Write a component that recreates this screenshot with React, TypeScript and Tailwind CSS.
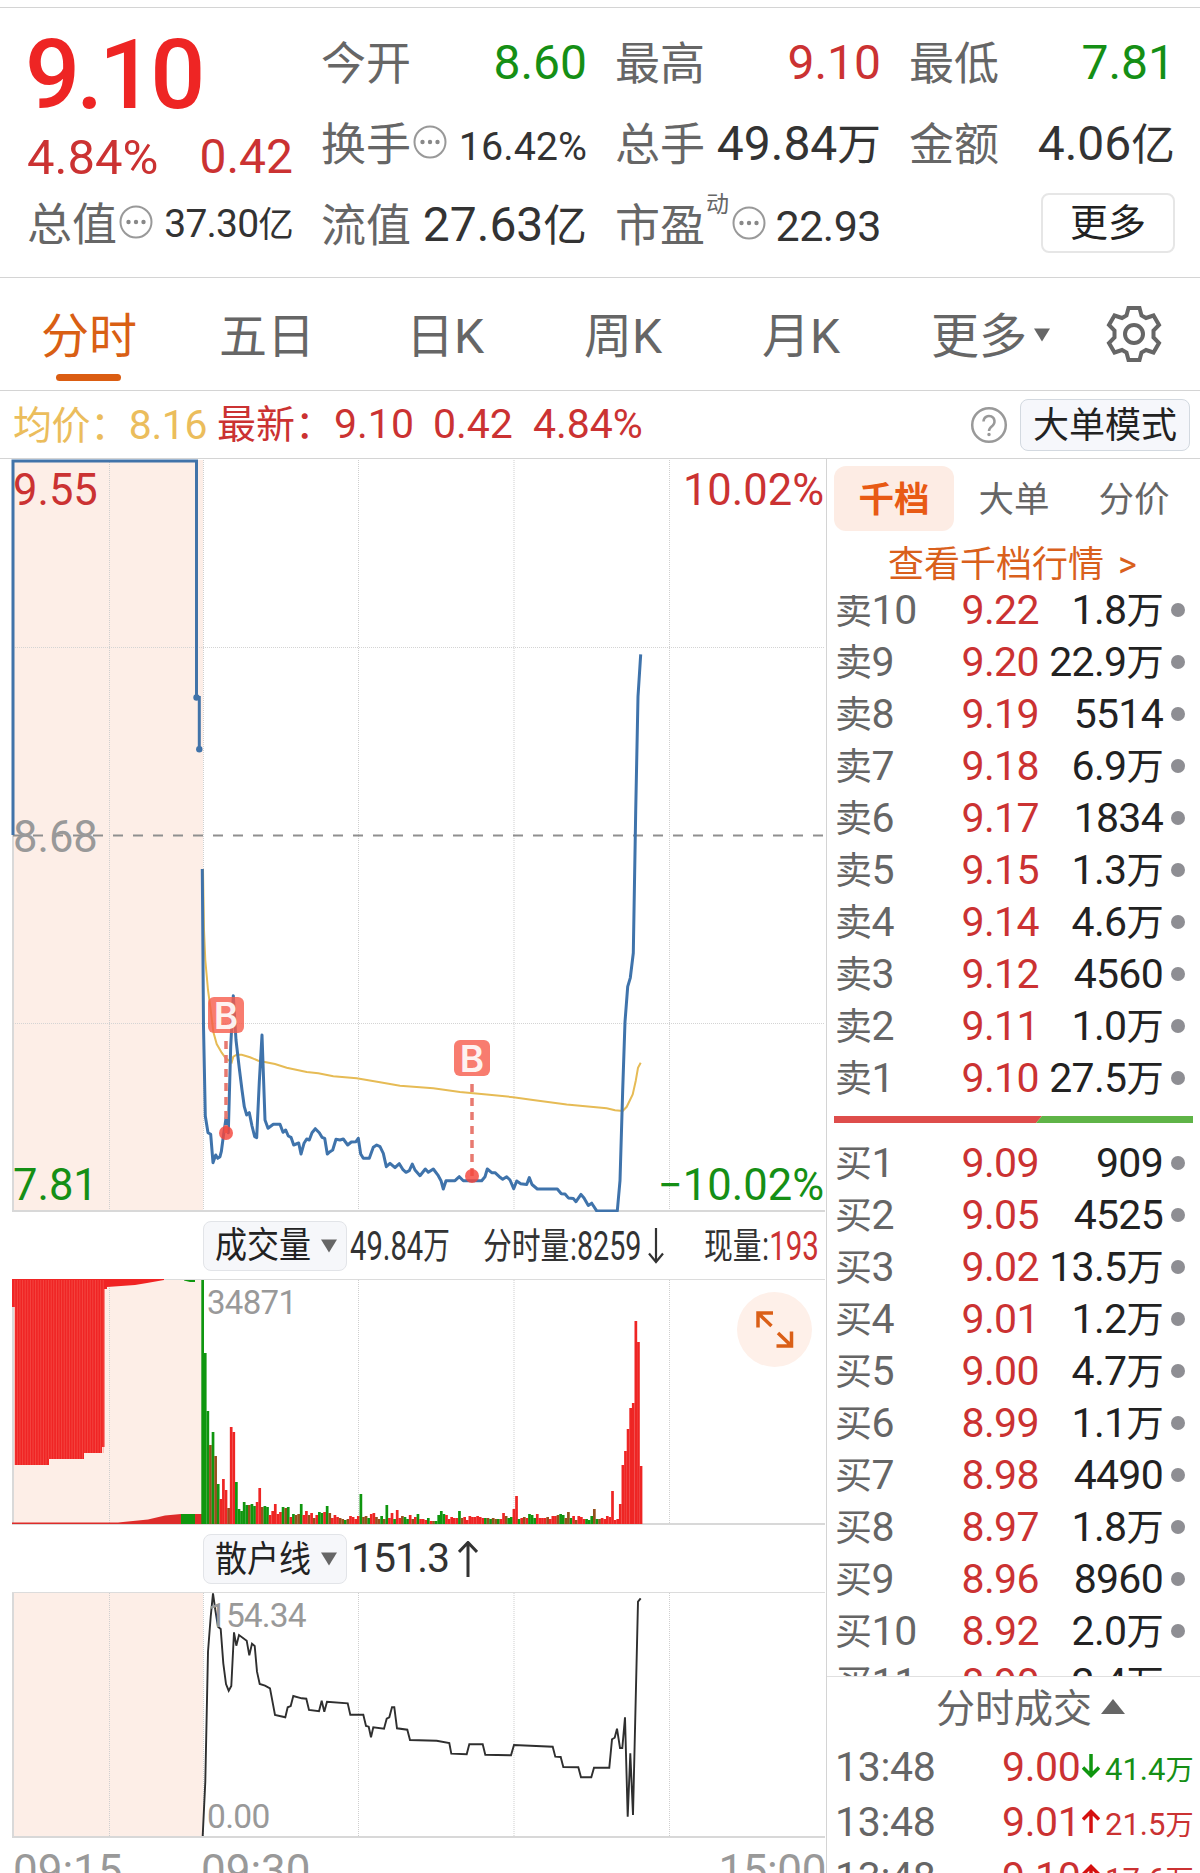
/**
 * Stock quote screen: quote header, period tabs, intraday charts,
 * order book and latest trades.
 */
import type { ReactNode } from 'react';

// ---------------------------------------------------------------------------
// Data
// ---------------------------------------------------------------------------

const PERIODS = ['分时', '五日', '日K', '周K', '月K'];

const ASKS = [
  ['卖10', '9.22', '1.8万'],
  ['卖9', '9.20', '22.9万'],
  ['卖8', '9.19', '5514'],
  ['卖7', '9.18', '6.9万'],
  ['卖6', '9.17', '1834'],
  ['卖5', '9.15', '1.3万'],
  ['卖4', '9.14', '4.6万'],
  ['卖3', '9.12', '4560'],
  ['卖2', '9.11', '1.0万'],
  ['卖1', '9.10', '27.5万'],
];

const BIDS = [
  ['买1', '9.09', '909'],
  ['买2', '9.05', '4525'],
  ['买3', '9.02', '13.5万'],
  ['买4', '9.01', '1.2万'],
  ['买5', '9.00', '4.7万'],
  ['买6', '8.99', '1.1万'],
  ['买7', '8.98', '4490'],
  ['买8', '8.97', '1.8万'],
  ['买9', '8.96', '8960'],
  ['买10', '8.92', '2.0万'],
  ['买11', '8.90', '2.4万'],
];

const TRADES = [
  { time: '13:48', price: '9.00', up: false, volume: '41.4万' },
  { time: '13:48', price: '9.01', up: true, volume: '21.5万' },
  { time: '13:48', price: '9.10', up: true, volume: '17.6万' },
];

// Chart x positions of the time grid
const GRID_X = [109.5, 203.5, 358.5, 514, 669.5];

const PRICE_LINE =
  '202.3,869 203.5,1026 205.3,1116 208,1132.7 210.7,1134.3 213,1162.7 215.7,1155 217.7,1158.3 220,1156.7 221.3,1151.7 223.3,1136.7 226,1118.3 228.3,1132.7 230.7,1046.7 233.3,995.7 236,1040 239.3,1068.3 242,1090 244.3,1106.7 246.7,1115 249.3,1112.7 252,1126 254.7,1136.7 256.7,1137.7 259.3,1081.7 262,1035 265,1120 268,1128.3 273.3,1124.3 280,1124.3 283,1132.3 285.7,1130 288.3,1136 291,1137.3 293.7,1145 298.7,1143 301,1154 304,1143.3 306.7,1139 309.3,1140 312,1132.7 315.3,1128.7 319.3,1132.7 322,1137.3 324.7,1138.3 327.3,1154 330,1151.7 332.7,1150 336,1139.3 340,1140 343.3,1139 347.7,1145 351.3,1142 356,1141.7 358.3,1138.3 360.7,1154 363.3,1158.3 369.3,1158.3 373.3,1147.3 376.7,1145 380,1146.7 383.3,1153.3 386.3,1166.7 390,1163.3 395,1167.7 399.3,1163.7 402.7,1169.3 406,1172.3 409.3,1170.7 412.3,1164 415,1170 420,1175.7 425.3,1169 428.3,1172.3 433.3,1169 438.3,1175.7 441,1180.7 443.3,1189 446,1180.7 455,1180.7 459.3,1176.7 463.3,1180.7 481.7,1180.7 485,1176.7 487.3,1169 491.7,1172.7 495,1172.7 499.3,1176.7 502.7,1179.3 506.7,1176.7 510,1180 513.7,1188.7 516.7,1181 520.7,1183.7 526.7,1184.5 529.3,1177.6 532,1184.5 537.3,1189 557.3,1189 561.3,1193.7 565,1194 568.3,1197.9 573.3,1198.6 576,1201.7 581,1194.4 584,1197.9 588.3,1205.5 591.7,1203.2 596.7,1210.9 617.3,1210.9 620,1180.7 622.7,1090 625,1021.8 627.7,986.6 630.3,977.8 633.3,953 635.7,811.3 638,696.5 640.7,654.4';

const AVERAGE_LINE =
  '203,869 204,930 205.3,960 208,990 210.7,1010 213.3,1031.7 216.7,1044 221.7,1052.7 225.7,1058.3 231.7,1062.3 233.3,1056.7 236.7,1054.7 241.7,1054.7 250,1057.3 258.3,1060.7 275,1064 286.7,1067.7 306.7,1072 318.3,1073.3 333.3,1076.3 356.7,1078.3 380,1082.3 400,1085.7 433.3,1088.3 460,1092 486.7,1094.5 513.3,1097.2 533,1100 566.7,1104.5 606.7,1108.3 615,1110.2 622.7,1111 626.7,1106.8 632.7,1094.5 635.7,1081 638,1067.8 640.7,1062.8';

const RETAIL_LINE =
  '202.7,1836 205.3,1781.7 208,1651.7 210.7,1616.7 213,1593.3 215.3,1610 218,1626.7 220.7,1629 223.3,1663.3 226,1684 228.7,1690.7 231.3,1686 234,1632.3 236.3,1645.7 239,1635 246.7,1640.7 249.3,1655.3 252,1643.7 254.7,1646 257,1671.7 259.7,1684 265,1685.7 270,1688.3 275,1715 285.3,1717.3 287.7,1707.3 290.7,1706 293.3,1696 301.7,1698.3 306.3,1698.7 309,1710 319,1711.3 321.7,1700.7 324.3,1711.7 327,1701.7 347.7,1703.3 350.3,1714.7 363.3,1714.7 366,1726 368.7,1726.7 371,1737.3 373.3,1727.3 384,1728.7 386.7,1718.7 389.3,1717.3 392,1707.3 394.3,1707.3 397,1728.3 407.3,1729.7 410,1740 436.7,1740.7 449.3,1743 451.3,1753.7 466.7,1754.3 469.3,1744.3 482.7,1744.3 485.3,1754.7 511,1755.3 514,1745 552.7,1746.7 555.3,1756.7 560.7,1757 563.3,1767 578.3,1767.3 581,1777.3 591.3,1777.3 594,1767.7 609.3,1767.7 612,1739.3 614.7,1737.7 617,1728.7 620,1748 622.3,1748 625,1717.3 627.7,1816.7 630.3,1753.3 633,1815 638,1601.7 640.7,1598.3';

// One bar per minute from 09:30
const VOLUMES = [
  244, 171, 113, 79, 92, 68, 40, 25, 45, 34, 16, 97, 92, 42, 15, 13, 22, 19, 19, 20, 18, 22, 36, 17, 18, 17, 9, 13, 20,
  10, 12, 17, 16, 17, 7, 10, 9, 10, 20, 9, 13, 9, 11, 6, 9, 12, 11, 12, 18, 11, 6, 9, 7, 6, 5, 4, 5, 8, 7, 5, 8, 30, 7,
  8, 6, 10, 11, 7, 5, 8, 5, 19, 6, 11, 5, 14, 6, 8, 7, 5, 9, 5, 7, 10, 5, 5, 4, 6, 3, 3, 3, 9, 13, 10, 9, 5, 7, 6, 6, 13,
  6, 7, 4, 8, 7, 7, 8, 7, 6, 6, 6, 5, 6, 5, 5, 5, 11, 8, 6, 7, 15, 28, 5, 6, 7, 6, 10, 9, 6, 10, 6, 6, 6, 7, 5, 8, 8, 9,
  10, 9, 6, 12, 6, 8, 4, 8, 7, 5, 5, 4, 8, 15, 5, 5, 6, 5, 8, 7, 33, 4, 5, 20, 59, 73, 95, 116, 121, 203, 182, 58,
];

const VOLUME_SIDES =
  'gggmgmgrrrmrrgggggmggrrmggrrrrrgmgrgmmgrrmrmrggrgmrrrmmgmrrrrgmmgrrmmgmgrrgrrmggrmrgrrrgrmggggrrrrrgmrrrrrrrrgmgmmgrrmggrrgrmrgggrrrrmrrrmggmmgrmrrrgggmgmrrrrrrrrrrrrrrrrrrr';

const SIDE_COLORS: Record<string, string> = { g: '#0f960f', r: '#ee2524', m: '#96501c' };

// ---------------------------------------------------------------------------
// Small pieces
// ---------------------------------------------------------------------------

/** Number followed by an optional Chinese unit, which is set a little smaller. */
function Amount({ value }: { value: string }) {
  const unit = value.match(/[万亿]$/)?.[0];
  return (
    <>
      {unit ? value.slice(0, -1) : value}
      {unit && <span className="text-[0.91em]">{unit}</span>}
    </>
  );
}

function MoreDots() {
  return (
    <svg className="mb-1 ml-px h-9 w-9 shrink-0" viewBox="0 0 36 36">
      <circle cx="18" cy="18" r="15.5" fill="none" stroke="#999" strokeWidth="2" />
      <circle cx="10.5" cy="18" r="2.2" fill="#888" />
      <circle cx="18" cy="18" r="2.2" fill="#888" />
      <circle cx="25.5" cy="18" r="2.2" fill="#888" />
    </svg>
  );
}

function Stat({ label, extra, children }: { label: string; extra?: ReactNode; children: ReactNode }) {
  return (
    <div className="flex h-[81px] items-center">
      <span className="-ml-px pt-[3px] text-[45px] text-[#666]">{label}</span>
      {extra}
      <span className="ml-auto">{children}</span>
    </div>
  );
}

function IndicatorButton({ label }: { label: string }) {
  return (
    <div className="flex h-[50px] w-[144px] shrink-0 items-center rounded-lg border border-[#e2e4e8] bg-[#f6f7fa] pl-[11px] text-[#222]">
      <span className="w-[106px] shrink-0">
        <span className="inline-block origin-left scale-x-[0.89] text-[36px] whitespace-nowrap">{label}</span>
      </span>
      <svg className="h-[14px] w-4 shrink-0" viewBox="0 0 16 14">
        <path d="M0 0.5h16L8 13.5z" fill="#666" />
      </svg>
    </div>
  );
}

function BookRow({ row }: { row: string[] }) {
  const [label, price, volume] = row;
  return (
    <div className="flex h-[52px] shrink-0 items-center pt-px text-[41px]">
      <span className="w-[100px] tracking-[-0.4px] text-[#666]">
        <span className="text-[37px]">{label[0]}</span>
        {label.slice(1)}
      </span>
      <span className="w-[104px] text-right tracking-[-0.6px] text-[#cb3232]">{price}</span>
      <span className="w-[124px] text-right tracking-[-0.7px] whitespace-nowrap text-[#222]">
        <Amount value={volume} />
      </span>
      <span className="mb-0.5 ml-2 h-[14px] w-[14px] rounded-full bg-[#8e8e93]" />
    </div>
  );
}

// ---------------------------------------------------------------------------
// Charts
// ---------------------------------------------------------------------------

function TimeGrid({ top, bottom }: { top: number; bottom: number }) {
  return (
    <>
      <rect x="13" y={top} width="190" height={bottom - top} fill="#fdeee7" />
      {GRID_X.map((x) => (
        <line key={x} x1={x} x2={x} y1={top} y2={bottom} stroke="#cfcfcf" strokeDasharray="1 1" />
      ))}
      <line x1="13" x2="13" y1={top} y2={bottom} stroke="#d9d9d9" strokeWidth="2" />
      <line x1="12" x2="825" y1={bottom} y2={bottom} stroke="#d8d8d8" strokeWidth="2" />
    </>
  );
}

function BuyMark({ x, top, bottom }: { x: number; top: number; bottom: number }) {
  return (
    <g>
      <line x1={x} x2={x} y1={top + 44} y2={bottom} stroke="#e87a70" strokeWidth="3.5" strokeDasharray="8 6" />
      <circle cx={x} cy={bottom} r="7" fill="#f4463c" fillOpacity="0.82" />
      <rect x={x - 18} y={top} width="36" height="36" rx="6" fill="#f65b4b" fillOpacity="0.8" />
      <text x={x} y={top + 31.5} fontSize="37" textAnchor="middle" className="fill-white font-[Inter] font-semibold opacity-90">
        B
      </text>
    </g>
  );
}

function PriceChart() {
  return (
    <svg className="block h-[753px] w-[826px]" viewBox="0 459 826 753" fontSize="43.5">
      <TimeGrid top={460} bottom={1211} />
      <line x1="13" x2="825" y1="647.5" y2="647.5" stroke="#d4d4d4" strokeDasharray="1 1" />
      <line x1="13" x2="825" y1="1023.5" y2="1023.5" stroke="#d4d4d4" strokeDasharray="1 1" />
      <line x1="13" x2="825" y1="835.5" y2="835.5" stroke="#8f8f8f" strokeWidth="2" strokeDasharray="10 10" />
      <polyline points={AVERAGE_LINE} fill="none" stroke="#e6bb55" strokeWidth="2" />
      <path d="M13 835V461H196.5V697.5H199.3V749" fill="none" stroke="#4173a9" strokeWidth="3" />
      <circle cx="196.5" cy="697.5" r="3.2" fill="#4173a9" />
      <circle cx="199.3" cy="749.3" r="3.2" fill="#4173a9" />
      <polyline points={PRICE_LINE} fill="none" stroke="#3f73ab" strokeWidth="3" strokeLinejoin="round" />
      <BuyMark x={226} top={997} bottom={1133} />
      <BuyMark x={472} top={1040} bottom={1176} />
      <text x="13" y="505" fill="#cb3232">9.55</text>
      <text x="824" y="505" fill="#cb3232" textAnchor="end">10.02%</text>
      <text x="13" y="852" fill="#999">8.68</text>
      <text x="13" y="1199.5" fill="#158f15">7.81</text>
      <text x="824" y="1199.5" fill="#158f15" textAnchor="end">−10.02%</text>
    </svg>
  );
}

function VolumeChart() {
  return (
    <svg className="block h-[246px] w-[826px]" viewBox="0 1279 826 246" fontSize="33">
      <TimeGrid top={1280} bottom={1524} />
      <line x1="12" x2="825" y1="1279.5" y2="1279.5" stroke="#dcdcdc" />
      {/* Call auction: matched volume hangs from the top */}
      <path
        d="M12 1279h152v1l-17 3-12 2-14 1-14 1v2h-2.500v158h-2.500v6h-18v6h-35v6h-34v-158h-3z"
        fill="#f02424"
      />
      {Array.from({ length: 35 }, (_, i) => (
        <line key={i} x1={14.8 + i * 2.6} x2={14.8 + i * 2.6} y1="1280" y2={i < 13 ? 1465 : i < 27 ? 1459 : 1453} stroke="#f6685f" strokeWidth="0.5" />
      ))}
      <path d="M184 1280h11v2h-5l-6-1.500z" fill="#0f960f" />
      <path d="M12 1522.500h106l30-3 17-4 16-1.500h22v10h-191z" fill="#dd2c2a" />
      <path d="M181 1514h14v10h-14z" fill="#0f960f" />
      {VOLUMES.map((h, i) => (
        <rect key={i} x={201.3 + i * 2.594} y={1524 - h} width="2.7" height={h} fill={SIDE_COLORS[VOLUME_SIDES[i]]} />
      ))}
      <circle cx="774.500" cy="1329.500" r="37.500" fill="#fef0e9" />
      <path
        d="M758 1327.500V1313h15M759 1314l12.500 12M791.500 1331.500V1346h-15M790.500 1345l-12.500-12"
        fill="none"
        stroke="#da5f17"
        strokeWidth="3.5"
      />
      <text x="207" y="1314" fill="#999" letterSpacing="-0.7">34871</text>
    </svg>
  );
}

function RetailChart() {
  return (
    <svg className="block h-[247px] w-[826px]" viewBox="0 1592 826 247" fontSize="33.5">
      <TimeGrid top={1593} bottom={1837} />
      <line x1="12" x2="825" y1="1592.500" y2="1592.500" stroke="#dcdcdc" />
      <polyline points={RETAIL_LINE} fill="none" stroke="#2f2f2f" strokeWidth="1.9" />
      <text x="208" y="1627" fill="#999" letterSpacing="-0.9">154.34</text>
      <text x="207" y="1828" fill="#999" letterSpacing="-0.7">0.00</text>
    </svg>
  );
}

// ---------------------------------------------------------------------------
// Sections
// ---------------------------------------------------------------------------

function QuoteHeader() {
  return (
    <header className="mt-[7px] flex h-[271px] shrink-0 gap-[29px] border-y border-[#d4d4d4] pt-[14px] pl-7 text-[48px] text-[#333]">
      <div className="w-[265px]">
        <div className="-ml-[3px] flex h-[104px] items-center pt-0.5 text-[97px] font-medium tracking-[-4px] text-[#ee2524]">9.10</div>
        <div className="flex h-[61px] items-center justify-between pt-px text-[#cb3232]">
          <span className="-ml-px text-[49px]">4.84%</span>
          <span>0.42</span>
        </div>
        <div className="flex h-[74px] items-center">
          <span className="-ml-px pt-[3px] text-[45px] text-[#666]">总值</span>
          <MoreDots />
          <span className="ml-auto text-[39px] tracking-[-0.8px]">
            <Amount value="37.30亿" />
          </span>
        </div>
      </div>
      <div className="w-[265px]">
        <Stat label="今开">
          <span className="text-[#158f15]">8.60</span>
        </Stat>
        <Stat label="换手" extra={<MoreDots />}>
          <span className="text-[39.5px]">16.42%</span>
        </Stat>
        <Stat label="流值">
          <Amount value="27.63亿" />
        </Stat>
      </div>
      <div className="w-[265px]">
        <Stat label="最高">
          <span className="text-[#cb3232]">9.10</span>
        </Stat>
        <Stat label="总手">
          <Amount value="49.84万" />
        </Stat>
        <Stat
          label="市盈"
          extra={
            <>
              <span className="mr-px mb-10 ml-px text-[23px] text-[#666]">动</span>
              <MoreDots />
            </>
          }
        >
          <span className="text-[43px] tracking-[-0.5px]">22.93</span>
        </Stat>
      </div>
      <div className="w-[265px]">
        <Stat label="最低">
          <span className="text-[#158f15]">7.81</span>
        </Stat>
        <Stat label="金额">
          <Amount value="4.06亿" />
        </Stat>
        <div className="mt-[9px] ml-auto flex h-[60px] w-[134px] items-center justify-center rounded-lg border-2 border-[#e6e6e6] text-[38px] text-[#222]">
          更多
        </div>
      </div>
    </header>
  );
}

function PeriodTabs() {
  return (
    <nav className="flex h-[113px] shrink-0 border-b border-[#d4d4d4] text-[48px] text-[#666]">
      {PERIODS.map((name, i) => (
        <div key={name} className={i === 0 ? 'relative w-[178px] text-[#d95f14]' : 'w-[178px]'}>
          <div className="flex h-[114px] items-center justify-center pt-[3px]">{name}</div>
          {i === 0 && <div className="absolute bottom-[9px] left-14 h-[7px] w-[65px] rounded-full bg-[#db5d12]" />}
        </div>
      ))}
      <div className="ml-[41px] flex h-[114px] w-[175px] items-center">
        <span className="pt-[3px]">更多</span>
        <svg className="ml-[7px] h-[14px] w-4" viewBox="0 0 16 14">
          <path d="M0 0.500h16L8 13.500z" fill="#666" />
        </svg>
      </div>
      <svg className="mt-7 h-[56px] w-[56px]" viewBox="-28 -28 56 56" fill="none" stroke="#666" strokeWidth="4">
        <path d="M-5.500-26H5.500L7.500-18.500 12-16 19.500-18.500 25-9 19.500-3.500V3.500L25 9 19.500 18.500 12 16 7.500 18.500 5.500 26H-5.500L-7.500 18.500-12 16-19.500 18.500-25 9-19.500 3.500V-3.500L-25-9-19.500-18.500-12-16-7.500-18.500Z" />
        <circle r="9" />
      </svg>
    </nav>
  );
}

function SummaryBar() {
  return (
    <div className="flex h-[68px] shrink-0 items-center border-b border-[#d4d4d4] pl-[13px] text-[41px] text-[#cb3232]">
      <div className="w-[204px] pt-px tracking-[-0.4px] text-[#ebbd5c]">
        <span className="text-[39px]">均价：</span>8.16
      </div>
      <span className="pt-0.5 text-[39px]">最新：</span>
      <span>9.10</span>
      <span className="ml-[19px]">0.42</span>
      <span className="ml-[20px]">4.84%</span>
      <svg className="ml-auto h-[38px] w-[38px]" viewBox="0 0 38 38" fill="none" stroke="#999" strokeWidth="2.5">
        <circle cx="19" cy="19" r="16.800" />
        <path d="M13.500 15.500a5.500 5.500 0 1 1 9 4.200c-2.300 1.800-3.500 2.600-3.500 5.300" />
        <circle cx="19" cy="28.500" r="1" fill="#999" strokeWidth="1.500" />
      </svg>
      <div className="mr-[10px] ml-3 flex h-[52px] w-[170px] items-center justify-center rounded-lg border border-[#d3d9e0] bg-[#f6f7fb] pt-[3px] text-[36px] text-[#222]">
        大单模式
      </div>
    </div>
  );
}

function ChartPanel() {
  return (
    <section className="w-[827px] shrink-0 border-r border-[#d4d4d4]">
      <PriceChart />
      <div className="flex h-[67px] items-center pl-[203px] text-[#333]">
        <IndicatorButton label="成交量" />
        <div className="ml-[3px] w-[133px] shrink-0 pt-0.5">
          <div className="flex w-[140px] origin-left scale-x-[0.72] items-center text-[40.5px] whitespace-nowrap">
            49.84<span className="text-[37px]">万</span>
          </div>
        </div>
        <div className="w-[87px] shrink-0 pt-[3px]">
          <div className="origin-left scale-x-[0.8] text-[36px] whitespace-nowrap">分时量</div>
        </div>
        <div className="w-[78px] shrink-0 pt-0.5">
          <div className="origin-left scale-x-[0.7] text-[41px] whitespace-nowrap">:8259</div>
        </div>
        <svg className="h-9 w-4 shrink-0" viewBox="0 0 16 36" fill="none" stroke="#333" strokeWidth="2.2">
          <path d="M8 0v34M1 25.500l7 8.500 7-8.500" />
        </svg>
        <div className="ml-[40px] w-[58px] shrink-0 pt-[3px]">
          <div className="origin-left scale-x-[0.8] text-[36px] whitespace-nowrap">现量</div>
        </div>
        <div className="w-[58px] pt-0.5">
          <div className="origin-left scale-x-[0.72] text-[41px] whitespace-nowrap">
            :<span className="text-[#cb3232]">193</span>
          </div>
        </div>
      </div>
      <VolumeChart />
      <div className="flex h-[67px] items-center pl-[203px] text-[41px] text-[#333]">
        <IndicatorButton label="散户线" />
        <span className="ml-1 tracking-[-1px]">151.3</span>
        <svg className="ml-[9px] h-9 w-5" viewBox="0 0 20 36" fill="none" stroke="#333" strokeWidth="3">
          <path d="M10 36V2M1 11l9-9.500L19 11" />
        </svg>
      </div>
      <RetailChart />
      <div className="mt-[10px] flex pl-[13px] text-[44px] text-[#999]">
        <span className="w-[188px]">09:15</span>
        <span>09:30</span>
        <span className="ml-auto tracking-[-0.4px]">15:00</span>
      </div>
    </section>
  );
}

function OrderBook() {
  return (
    <section className="flex grow flex-col">
      <div className="mt-[7px] ml-[7px] flex h-[65px] shrink-0 text-[35.5px] text-[#666]">
        <div className="flex w-[120px] items-center justify-center rounded-xl bg-[#fdece4] pt-1 font-bold text-[#e85a14]">千档</div>
        <div className="flex w-[120px] items-center justify-center pt-1">大单</div>
        <div className="flex w-[120px] items-center justify-center pt-1">分价</div>
      </div>
      <div className="flex h-16 shrink-0 items-center pt-1 pl-[61px] text-[36px] text-[#d9601c]">
        查看千档行情
        <span className="ml-[14px]">&gt;</span>
      </div>
      <div className="flex h-[1081px] shrink-0 flex-col overflow-hidden pl-2">
        <div className="-mt-[11px] flex shrink-0 flex-col">
          {ASKS.map((row) => (
            <BookRow key={row[0]} row={row} />
          ))}
        </div>
        <svg className="mt-3 -ml-px h-[7px] w-[359px] shrink-0" viewBox="0 0 359 7">
          <path d="M0 0h208l-6 7H0z" fill="#de4d4b" />
          <path d="M208 0h151v7H202z" fill="#5fb447" />
        </svg>
        <div className="mt-[14px] flex shrink-0 flex-col">
          {BIDS.map((row) => (
            <BookRow key={row[0]} row={row} />
          ))}
        </div>
      </div>
      <div className="shrink-0 border-t border-[#e0e0e0]">
        <div className="flex h-[62px] items-center pl-[109px] text-[39px] text-[#666]">
          <span className="pt-0.5">分时成交</span>
          <svg className="mb-1 ml-[9px] h-[15px] w-[24px]" viewBox="0 0 24 15">
            <path d="M0 15L12 0l12 15z" fill="#666" />
          </svg>
        </div>
        {TRADES.map((trade, i) => (
          <div key={i} className="flex h-[55px] items-center pt-px pl-2 text-[41px]">
            <span className="w-[167px] tracking-[-0.3px] text-[#666]">{trade.time}</span>
            <span className="w-[80px] tracking-[-0.4px] text-[#cb3232]">{trade.price}</span>
            <svg
              className={trade.up ? 'mb-0.5 h-6 w-[18px] rotate-180 text-[#d5100f]' : 'mb-0.5 h-6 w-[18px] text-[#0f960f]'}
              viewBox="0 0 18 24"
              fill="none"
              stroke="currentColor"
              strokeWidth="3.500"
            >
              <path d="M9 0v22M1 13.500l8 8 8-8" />
            </svg>
            <span className={trade.up ? 'mt-[6px] ml-[5px] text-[31px] text-[#cb3232]' : 'mt-[6px] ml-[5px] text-[31px] text-[#158f15]'}>
              <Amount value={trade.volume} />
            </span>
          </div>
        ))}
      </div>
    </section>
  );
}

export default function App() {
  return (
    <div className="flex h-[1873px] w-[1200px] flex-col overflow-hidden bg-white font-[Roboto,'Noto_Sans_CJK_SC',sans-serif] leading-none">
      <QuoteHeader />
      <PeriodTabs />
      <SummaryBar />
      <main className="flex min-h-0 grow">
        <ChartPanel />
        <OrderBook />
      </main>
    </div>
  );
}
